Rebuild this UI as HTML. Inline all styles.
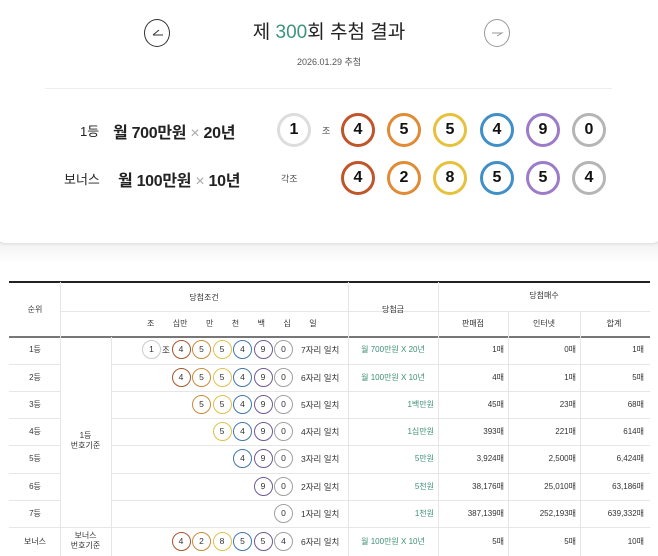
<!DOCTYPE html>
<html><head><meta charset="utf-8"><style>
*{margin:0;padding:0;box-sizing:border-box}
body{width:658px;height:556px;overflow:hidden;background:#fff;font-family:"Liberation Sans","Noto Sans CJK KR",sans-serif;color:#222;position:relative}
.card{position:absolute;left:-6px;top:-20px;width:670px;height:264px;border-radius:12px;background:#fff;border:1px solid #e4e4e4;box-shadow:0 1px 2px rgba(0,0,0,.06)}
.under{position:absolute;left:0;top:240px;width:658px;height:24px;background:linear-gradient(#f1f1f1,#fff)}
.abs{position:absolute}
.arrow{position:absolute;width:26px;height:28px;border:1px solid #444;border-radius:50%}
.big{position:absolute;width:34px;height:34px;border-radius:50%;border:3px solid;text-align:center;line-height:28px;font-weight:bold;font-size:16px;color:#111;background:#fff}
.sm{position:absolute;width:19px;height:19px;border-radius:50%;border:1.3px solid;text-align:center;line-height:16px;font-size:8.5px;color:#333;background:#fff}
.c0{border-color:#a8552e}.c1{border-color:#c98a3c}.c2{border-color:#e0c04a}.c3{border-color:#3f77a8}.c4{border-color:#6f5a94}.c5{border-color:#a0a0a0}.cg{border-color:#ccc}
.big.c0{border-color:#c0542a}.big.c1{border-color:#e08b35}.big.c2{border-color:#e6c23c}.big.c3{border-color:#3f8fc9}.big.c4{border-color:#9c7cc9}.big.c5{border-color:#b5b5b5}.big.cg{border-color:#ddd}
.t{position:absolute;font-size:8px;color:#333;text-align:center}
.hl{position:absolute;height:1px;background:#e6e6e6}
.vl{position:absolute;width:1px;background:#e6e6e6}
.g{color:#3d8f77}
</style></head><body>
<div class="under"></div>
<div class="card"></div>
<div class="arrow" style="left:144px;top:19px;border-color:#333"></div>
<svg class="abs" style="left:150px;top:27px" width="16" height="12"><path d="M3 8 L13 8 M3 8 L9 3" stroke="#333" stroke-width="1" fill="none"/></svg>
<div class="arrow" style="left:484px;top:19px;border-color:#999"></div>
<svg class="abs" style="left:490px;top:27px" width="16" height="12"><path d="M2 6 L12 6 L7 9" stroke="#999" stroke-width="1" fill="none"/></svg>
<div class="abs" style="left:0;width:658px;top:17px;text-align:center;font-size:19px;color:#222">제 <span style="color:#3d9480">300</span>회 추첨 결과</div>
<div class="abs" style="left:0;width:658px;top:55px;text-align:center;font-size:9px;color:#555">2026.01.29 추첨</div>
<div class="abs" style="left:45px;top:88px;width:567px;height:1px;background:#eee"></div>
<div class="abs" style="left:80px;top:121px;font-size:13px">1등</div>
<div class="abs" style="left:113px;top:119px;font-size:16px;font-weight:bold;letter-spacing:-0.3px">월 700만원 <span style="font-weight:normal;color:#aaa">×</span> 20년</div>
<div class="abs" style="left:64px;top:169px;font-size:13px">보너스</div>
<div class="abs" style="left:118px;top:167px;font-size:16px;font-weight:bold;letter-spacing:-0.3px">월 100만원 <span style="font-weight:normal;color:#aaa">×</span> 10년</div>
<div class="big cg" style="left:277px;top:113px">1</div>
<div class="abs" style="left:322px;top:124px;font-size:9px;color:#555">조</div>
<div class="abs" style="left:281px;top:172px;font-size:9px;color:#555">각조</div>
<div class="big c0" style="left:341px;top:113px">4</div><div class="big c1" style="left:387px;top:113px">5</div><div class="big c2" style="left:433px;top:113px">5</div><div class="big c3" style="left:480px;top:113px">4</div><div class="big c4" style="left:526px;top:113px">9</div><div class="big c5" style="left:572px;top:113px">0</div>
<div class="big c0" style="left:341px;top:161px">4</div><div class="big c1" style="left:387px;top:161px">2</div><div class="big c2" style="left:433px;top:161px">8</div><div class="big c3" style="left:480px;top:161px">5</div><div class="big c4" style="left:526px;top:161px">5</div><div class="big c5" style="left:572px;top:161px">4</div>

<div class="abs" style="left:9px;top:281px;width:641px;height:1.5px;background:#222"></div>
<div class="abs" style="left:9px;top:336px;width:641px;height:1.5px;background:#777"></div>
<div class="hl" style="left:60px;top:311px;width:590px"></div>
<div class="vl" style="left:60px;top:282px;height:274px"></div>
<div class="vl" style="left:111px;top:337px;height:219px"></div>
<div class="vl" style="left:348px;top:282px;height:274px"></div>
<div class="vl" style="left:438px;top:282px;height:274px"></div>
<div class="vl" style="left:508px;top:311px;height:245px"></div>
<div class="vl" style="left:580px;top:311px;height:245px"></div>
<div class="t" style="left:10px;width:50px;top:304px">순위</div>
<div class="t" style="left:60px;width:288px;top:292px">당첨조건</div>
<div class="t" style="left:348px;width:90px;top:304px">당첨금</div>
<div class="t" style="left:438px;width:212px;top:290px">당첨매수</div>
<div class="t" style="left:438px;width:70px;top:318px">판매점</div>
<div class="t" style="left:508px;width:72px;top:318px">인터넷</div>
<div class="t" style="left:580px;width:68px;top:318px">합계</div>
<div class="t" style="left:147px;top:318px;word-spacing:7px">조 &nbsp;십만 &nbsp;만 &nbsp;천 &nbsp;백 &nbsp;십 &nbsp;일</div>
<div class="t" style="left:60px;width:51px;top:431px;line-height:10px">1등<br>번호기준</div>
<div class="t" style="left:60px;width:51px;top:531px;line-height:10px">보너스<br>번호기준</div>

<div class="hl" style="left:9px;top:364px;width:51px"></div><div class="hl" style="left:111px;top:364px;width:539px"></div>
<div class="hl" style="left:9px;top:391px;width:51px"></div><div class="hl" style="left:111px;top:391px;width:539px"></div>
<div class="hl" style="left:9px;top:418px;width:51px"></div><div class="hl" style="left:111px;top:418px;width:539px"></div>
<div class="hl" style="left:9px;top:445px;width:51px"></div><div class="hl" style="left:111px;top:445px;width:539px"></div>
<div class="hl" style="left:9px;top:473px;width:51px"></div><div class="hl" style="left:111px;top:473px;width:539px"></div>
<div class="hl" style="left:9px;top:500px;width:51px"></div><div class="hl" style="left:111px;top:500px;width:539px"></div>
<div class="hl" style="left:9px;top:527px;width:641px"></div>

<div id="rows"></div>
<script>
var rows=[["1등",[[ -1,"1"],[0,"4"],[1,"5"],[2,"5"],[3,"4"],[4,"9"],[5,"0"]],"7자리 일치","월 700만원 X 20년","1매","0매","1매"],
["2등",[[0,"4"],[1,"5"],[2,"5"],[3,"4"],[4,"9"],[5,"0"]],"6자리 일치","월 100만원 X 10년","4매","1매","5매"],
["3등",[[1,"5"],[2,"5"],[3,"4"],[4,"9"],[5,"0"]],"5자리 일치","1백만원","45매","23매","68매"],
["4등",[[2,"5"],[3,"4"],[4,"9"],[5,"0"]],"4자리 일치","1십만원","393매","221매","614매"],
["5등",[[3,"4"],[4,"9"],[5,"0"]],"3자리 일치","5만원","3,924매","2,500매","6,424매"],
["6등",[[4,"9"],[5,"0"]],"2자리 일치","5천원","38,176매","25,010매","63,186매"],
["7등",[[5,"0"]],"1자리 일치","1천원","387,139매","252,193매","639,332매"],
["보너스",[[0,"4"],[1,"2"],[2,"8"],[3,"5"],[4,"5"],[5,"4"]],"6자리 일치","월 100만원 X 10년","5매","5매","10매"]];
var tops=[336,364,391,418,445,473,500,527],h="";
rows.forEach(function(r,i){var y=tops[i]+(i==7?14:13);
h+='<div class="t" style="left:10px;width:50px;top:'+(y-5)+'px">'+r[0]+'</div>';
r[1].forEach(function(b){var x,c;if(b[0]<0){x=142;c="cg"}else{x=171.5+b[0]*20.5;c="c"+b[0]}
h+='<div class="sm '+c+'" style="left:'+x+'px;top:'+(y-9.5)+'px">'+b[1]+'</div>';});
if(i==0)h+='<div class="t" style="left:162px;top:'+(y-5)+'px;font-size:8.5px">조</div>';
h+='<div class="t" style="left:301px;top:'+(y-5)+'px;font-size:8.5px">'+r[2]+'</div>';
var wide=r[3].indexOf("X")>0;
h+='<div class="t g" style="left:352px;width:82px;top:'+(y-5)+'px;text-align:'+(wide?'center':'right')+'">'+r[3]+'</div>';
h+='<div class="t" style="left:440px;width:64px;top:'+(y-5)+'px;text-align:right">'+r[4]+'</div>';
h+='<div class="t" style="left:510px;width:66px;top:'+(y-5)+'px;text-align:right">'+r[5]+'</div>';
h+='<div class="t" style="left:582px;width:62px;top:'+(y-5)+'px;text-align:right">'+r[6]+'</div>';});
document.getElementById("rows").innerHTML=h;
</script>
</body></html>
